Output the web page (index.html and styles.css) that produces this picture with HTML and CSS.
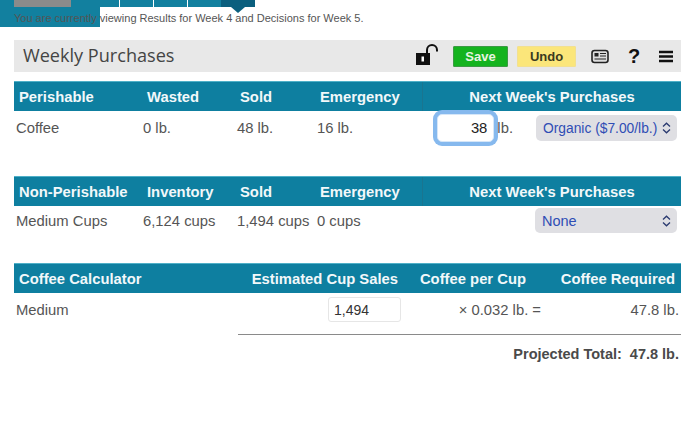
FILE: index.html
```html
<!DOCTYPE html>
<html lang="en">
<head>
    <meta charset="UTF-8">
    <meta name="viewport" content="width=device-width, initial-scale=1.0">
    <title>Weekly Purchases</title>
    <link rel="stylesheet" href="styles.css">
</head>
<body>
    <div class="week-nav">
        <div class="week-logo"><div class="week-logo-inner"></div></div>
        <div class="week-tab"></div>
        <div class="week-tab"></div>
        <div class="week-tab"></div>
        <div class="week-tab"></div>
        <div class="week-tab current"></div>
    </div>
    <p class="status-line">You are currently viewing Results for Week 4 and Decisions for Week 5.</p>

    <div class="page">
        <div class="title-bar">
            <h1>Weekly Purchases</h1>
            <div class="tools">
                <svg class="icon-lock" width="26" height="22" viewBox="0 0 26 22">
                    <rect x="1" y="9" width="14" height="12" fill="#111"/>
                    <rect x="6.500" y="12.500" width="2.500" height="5" fill="#fff"/>
                    <path d="M12 9V6a5 5 0 0 1 10 0v1.500" fill="none" stroke="#111" stroke-width="2"/>
                </svg>
                <button class="btn-save">Save</button>
                <button class="btn-undo">Undo</button>
                <svg class="icon-news" width="19" height="15" viewBox="0 0 19 15">
                    <rect x="1" y="1.500" width="16" height="12" rx="2.500" fill="#ddd" stroke="#222" stroke-width="1.600"/>
                    <rect x="3.500" y="4" width="4" height="3.500" fill="#222"/>
                    <path d="M9 4.500h6M9 7h6M3.500 10h11.500" stroke="#222" stroke-width="1.200"/>
                </svg>
                <span class="icon-help">?</span>
                <svg class="icon-menu" width="14" height="13" viewBox="0 0 14 13">
                    <path d="M0 2h14M0 6.500h14M0 11h14" stroke="#111" stroke-width="2.400"/>
                </svg>
            </div>
        </div>

        <div class="table-head purchase-cols first-table">
            <div>Perishable</div>
            <div>Wasted</div>
            <div>Sold</div>
            <div>Emergency</div>
            <div class="next-week">Next Week's Purchases</div>
        </div>
        <div class="table-row purchase-cols coffee-row">
            <div>Coffee</div>
            <div class="second-col">0 lb.</div>
            <div>48 lb.</div>
            <div>16 lb.</div>
            <div class="order-cell">
                <input class="qty-input" type="text" value="38">
                <span class="qty-unit">lb.</span>
                <div class="fake-select organic">Organic ($7.00/lb.)
                    <svg width="9" height="12" viewBox="0 0 9 12"><path d="M1 4.500L4.500 1.200 8 4.500M1 7.500l3.500 3.300L8 7.500" fill="none" stroke="#2a3a70" stroke-width="1.300"/></svg>
                </div>
            </div>
        </div>

        <div class="table-head purchase-cols second-table">
            <div>Non-Perishable</div>
            <div>Inventory</div>
            <div>Sold</div>
            <div>Emergency</div>
            <div class="next-week">Next Week's Purchases</div>
        </div>
        <div class="table-row purchase-cols cups-row">
            <div>Medium Cups</div>
            <div class="second-col">6,124 cups</div>
            <div>1,494 cups</div>
            <div>0 cups</div>
            <div class="order-cell">
                <div class="fake-select none-select">None
                    <svg width="9" height="12" viewBox="0 0 9 12"><path d="M1 4.500L4.500 1.200 8 4.500M1 7.500l3.500 3.300L8 7.500" fill="none" stroke="#2a3a70" stroke-width="1.300"/></svg>
                </div>
            </div>
        </div>

        <div class="table-head calc-cols third-table">
            <div>Coffee Calculator</div>
            <div class="right">Estimated Cup Sales</div>
            <div class="right">Coffee per Cup</div>
            <div class="right last-head">Coffee Required</div>
        </div>
        <div class="table-row calc-cols calc-row">
            <div>Medium</div>
            <div class="sales-cell"><input class="sales-input" type="text" value="1,494"></div>
            <div class="right per-cup">× 0.032 lb. =</div>
            <div class="right required">47.8 lb.</div>
        </div>
        <div class="total-line">
            <span>Projected Total:</span>
            <span>47.8 lb.</span>
        </div>
    </div>
</body>
</html>
```

FILE: styles.css
```css
body {
    margin: 0;
    font-family: "Liberation Sans", Arial, sans-serif;
    color: #555;
    background-color: white;
}

.week-nav {
    display: flex;
    height: 7px;
    padding-left: 86px;
    gap: 1px;
}

/* the logo block is cut off by the top of the window and sits behind the status line */
.week-logo {
    position: absolute;
    top: 0;
    left: 0;
    width: 100px;
    height: 27px;
    padding-left: 14px;
    box-sizing: border-box;
    background-color: #12809f;
}

.week-logo-inner {
    width: 57px;
    height: 7px;
    background-color: #8b8b8b;
}

.week-tab {
    width: 33px;
    background-color: #12809f;
}

.week-tab.current {
    position: relative;
    width: 34px;
    margin-left: -1px;
    background-color: #0b5f7e;
}

.week-tab.current::after {
    content: "";
    position: absolute;
    top: 7px;
    left: 10px;
    border-left: 7px solid transparent;
    border-right: 7px solid transparent;
    border-top: 6px solid #0b5f7e;
}

.status-line {
    position: relative;
    margin: 4px 0 0 14px;
    height: 29px;
    font-size: 11px;
    line-height: 14px;
    color: #555;
}

.page {
    width: 667px;
    margin-left: 14px;
}

.title-bar {
    display: flex;
    align-items: center;
    justify-content: space-between;
    height: 32px;
    background-color: #e8e8e8;
}

.title-bar h1 {
    margin: 0 0 2px 9px;
    font-family: "Open Sans", sans-serif;
    font-size: 18.100px;
    font-weight: 400;
    color: #444;
}

.tools {
    display: flex;
    align-items: center;
}

.icon-lock {
    margin: -2px 12px 0 0;
}

.tools button {
    height: 21px;
    border-width: 1px;
    border-style: solid;
    padding: 0;
    font-family: "Liberation Sans", Arial, sans-serif;
    font-size: 13px;
    font-weight: bold;
    border-radius: 1px;
}

.tools .btn-save {
    width: 55px;
    margin-right: 9px;
    background-color: #14b31e;
    border-color: #3c9a44;
    color: #e8f5e0;
}

.tools .btn-undo {
    width: 59px;
    margin-right: 15px;
    background-color: #fbe67a;
    border-color: #f2e090;
    color: #3a3a20;
}

.icon-news {
    margin-right: 18px;
}

.icon-help {
    width: 12px;
    margin-right: 19px;
    font-size: 20px;
    font-weight: bold;
    color: #111;
    text-align: center;
}

.icon-menu {
    margin-right: 8px;
}

.purchase-cols {
    display: grid;
    grid-template-columns: 128px 93px 80px 107px 259px;
}

.calc-cols {
    display: grid;
    grid-template-columns: 130px 259px 128px 150px;
}

.table-head {
    height: 30px;
    align-items: center;
    background-color: #0e7fa0;
    border-top: 1px solid #4fb0c8;
    box-sizing: border-box;
    font-size: 14.800px;
    font-weight: bold;
    color: #f2f8fa;
}

.table-head > div {
    padding-left: 5px;
    white-space: nowrap;
}

.table-head > .right {
    padding: 0 5px 0 0;
}

.table-head > .last-head {
    padding-right: 6px;
}

.table-head > .next-week {
    height: 100%;
    padding: 0;
    display: flex;
    align-items: center;
    justify-content: center;
    border-left: 1px solid #1a7590;
    box-sizing: border-box;
}

.right {
    text-align: right;
}

.first-table {
    margin-top: 9px;
}

.second-table {
    margin-top: 31px;
}

.third-table {
    margin-top: 28px;
}

.table-row {
    align-items: center;
    font-size: 14.800px;
    white-space: nowrap;
}

.table-row > div {
    padding-left: 2px;
}

.table-row > .second-col {
    padding-left: 1px;
}

.coffee-row {
    height: 34px;
}

.cups-row {
    height: 29px;
}

.calc-row {
    height: 33px;
}

.order-cell {
    display: flex;
    align-items: center;
    justify-content: flex-end;
}

.qty-input {
    width: 57px;
    height: 28px;
    margin-right: 3px;
    padding: 0 6px 0 0;
    box-sizing: border-box;
    border: 1px solid #d5e6f8;
    border-radius: 5px;
    outline: none;
    box-shadow: 0 0 0 4px #86b9ee;
    font-family: "Liberation Sans", Arial, sans-serif;
    font-size: 14.800px;
    text-align: right;
    color: #222;
}

.qty-unit {
    margin-right: 23px;
    position: relative;
}

.fake-select {
    display: flex;
    align-items: center;
    justify-content: space-between;
    box-sizing: border-box;
    margin-right: 4px;
    padding: 0 6px 0 7px;
    background-color: #dfdfe3;
    border-radius: 5px;
    color: #2f4db5;
    font-size: 13.800px;
}

.organic {
    width: 141px;
    height: 26px;
}

.none-select {
    width: 142px;
    height: 25px;
    font-size: 14.500px;
}

.sales-cell {
    display: flex;
    justify-content: flex-end;
}

.table-row > .sales-cell {
    padding: 0;
}

.sales-input {
    width: 73px;
    height: 25px;
    margin-right: 2px;
    padding: 0 5px;
    box-sizing: border-box;
    border: 1px solid #e6e6e6;
    border-radius: 3px;
    font-family: "Liberation Sans", Arial, sans-serif;
    font-size: 14px;
    color: #333;
}

.table-row > .per-cup {
    padding: 0;
    margin-right: -10px;
}

.table-row > .required {
    padding: 0 2px 0 0;
}

.total-line {
    display: flex;
    justify-content: flex-end;
    gap: 8px;
    margin: 8px 0 0 224px;
    padding: 11px 2px 0 0;
    border-top: 1px solid #8a8a8a;
    font-size: 14.500px;
    font-weight: bold;
    color: #4a4a4a;
}
```
